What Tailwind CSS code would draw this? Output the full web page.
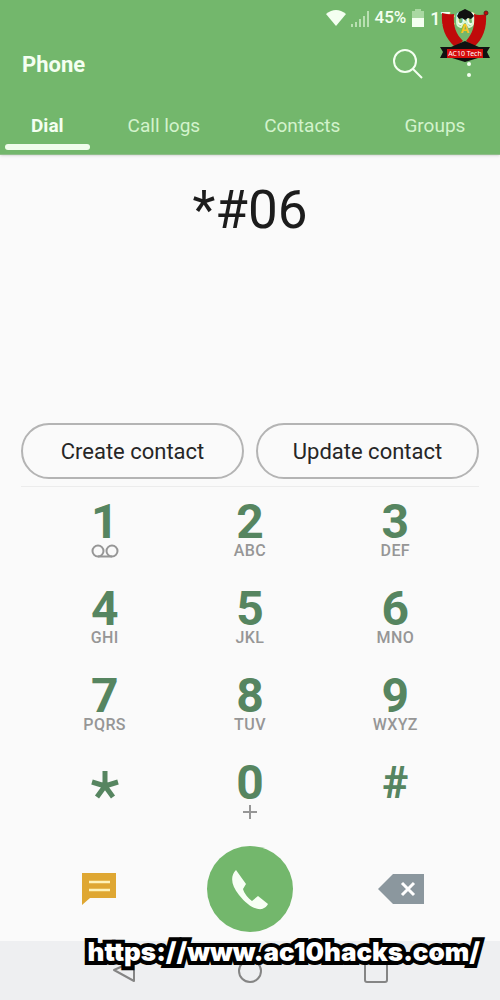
<!DOCTYPE html>
<html lang="en">
<head>
  <meta charset="UTF-8">
  <meta name="viewport" content="width=device-width, initial-scale=1.0">
  <title>Phone</title>
  <script src="https://cdn.jsdelivr.net/npm/@tailwindcss/browser@4"></script>
</head>
<body class="bg-[#fafafa] font-[Roboto,sans-serif]">
  <div class="relative min-h-screen flex flex-col">

    <header class="bg-[#73b76c] text-[#f4fff1] border-b border-[#8fbd8a] shadow-sm">
      <!-- Status bar -->
      <div class="flex items-center justify-end h-9 pr-6 text-[17px]">
        <svg class="w-5 h-4 mr-1" viewBox="0 0 20 16" fill="currentColor"><path d="M0 4 Q10 -4 20 4 L10 16 Z"/></svg>
        <svg class="w-5 h-5 mr-1" viewBox="0 0 20 20" fill="none" stroke="#b9e0b2" stroke-width="2"><path d="M2 19v-3M6 19v-5M10 19v-8M14 19v-11M18 19V3"/></svg>
        <span class="mr-1 font-medium">45%</span>
        <svg class="w-4 h-5 mr-1" viewBox="0 0 16 20"><path d="M5 1h6v2h3v8H2V3h3z" fill="#a9d8a2"/><path d="M2 10h12v9H2z" fill="#f4fff1"/></svg>
        <span class="text-[18px] font-medium">17:00</span>
      </div>

      <div class="flex items-center h-14 pl-[22px] pr-[27px]">
        <h1 class="text-[22px] font-bold">Phone</h1>
        <button type="button" aria-label="Search" class="ml-auto">
          <svg class="w-[30px] h-[30px]" viewBox="0 0 30 30" fill="none" stroke="currentColor" stroke-width="2"><circle cx="12" cy="12" r="11"/><path d="M20 20l9 9"/></svg>
        </button>
        <button type="button" aria-label="More options" class="ml-[42px]">
          <svg class="w-2 h-8" viewBox="0 0 8 32" fill="currentColor"><circle cx="4" cy="5" r="2"/><circle cx="4" cy="16" r="2"/><circle cx="4" cy="27" r="2"/></svg>
        </button>
      </div>

      <!-- Tabs -->
      <nav class="flex gap-3 px-[5px] pt-4 pb-1 text-[19px] leading-9 text-[#d3f3cc]">
        <a href="#dial" class="flex flex-col px-[26px] font-bold text-[#f4fff1]">Dial<span class="h-[6px] -mx-[26px] rounded-full bg-[#f0fcec]"></span></a>
        <a href="#logs" class="px-[26px] whitespace-nowrap">Call logs</a>
        <a href="#contacts" class="px-[26px]">Contacts</a>
        <a href="#groups" class="px-[26px]">Groups</a>
      </nav>
    </header>

    <main class="flex-1 flex flex-col">
      <input type="tel" aria-label="Number" value="*#06" class="w-full h-16 mt-6 text-center text-[53px] text-[#1c1c1c] outline-none">

      <div class="mt-auto mx-[21px] pb-[7px] flex gap-3 border-b border-[#ececec] text-[22px] text-[#262626]">
        <button type="button" class="flex-1 h-14 rounded-full border-2 border-[#b4b4b4]">Create contact</button>
        <button type="button" class="flex-1 h-14 rounded-full border-2 border-[#b4b4b4]">Update contact</button>
      </div>

      <!-- Keypad -->
      <div class="grid grid-cols-3 px-8 pt-[11px] text-[48px] leading-12 font-bold text-[#568560]">
        <button type="button" class="h-[87px] flex flex-col items-center">1
          <svg class="w-7 h-4 -mt-[3px]" viewBox="0 0 28 16" fill="none" stroke="#969696" stroke-width="2"><circle cx="7" cy="8" r="5.5"/><circle cx="21" cy="8" r="5.5"/><path d="M7 13.5h14"/></svg>
        </button>
        <button type="button" class="h-[87px] flex flex-col items-center">2<span class="-mt-[3px] text-[16px] leading-4 font-medium tracking-wide text-[#969696]">ABC</span></button>
        <button type="button" class="h-[87px] flex flex-col items-center">3<span class="-mt-[3px] text-[16px] leading-4 font-medium tracking-wide text-[#969696]">DEF</span></button>
        <button type="button" class="h-[87px] flex flex-col items-center">4<span class="-mt-[3px] text-[16px] leading-4 font-medium tracking-wide text-[#969696]">GHI</span></button>
        <button type="button" class="h-[87px] flex flex-col items-center">5<span class="-mt-[3px] text-[16px] leading-4 font-medium tracking-wide text-[#969696]">JKL</span></button>
        <button type="button" class="h-[87px] flex flex-col items-center">6<span class="-mt-[3px] text-[16px] leading-4 font-medium tracking-wide text-[#969696]">MNO</span></button>
        <button type="button" class="h-[87px] flex flex-col items-center">7<span class="-mt-[3px] text-[16px] leading-4 font-medium tracking-wide text-[#969696]">PQRS</span></button>
        <button type="button" class="h-[87px] flex flex-col items-center">8<span class="-mt-[3px] text-[16px] leading-4 font-medium tracking-wide text-[#969696]">TUV</span></button>
        <button type="button" class="h-[87px] flex flex-col items-center">9<span class="-mt-[3px] text-[16px] leading-4 font-medium tracking-wide text-[#969696]">WXYZ</span></button>
        <button type="button" aria-label="Star" class="h-[87px] flex flex-col items-center pt-3">
          <svg class="w-7 h-7" viewBox="0 0 28 28" fill="none" stroke="currentColor" stroke-width="5"><path d="M14 15V0M14 15L1 11M14 15l13-4M14 15L6 26M14 15l8 11"/></svg>
        </button>
        <button type="button" class="h-[87px] flex flex-col items-center">0
          <svg class="w-4 h-4 -mt-[3px]" viewBox="0 0 16 16" fill="none" stroke="#969696" stroke-width="2"><path d="M8 1v14M1 8h14"/></svg>
        </button>
        <button type="button" class="h-[87px] flex flex-col items-center text-[44px]">#</button>
      </div>

      <div class="grid grid-cols-3 items-center justify-items-center px-6 pb-[9px]">
        <button type="button" aria-label="Message">
          <svg class="w-9 h-8" viewBox="0 0 36 32"><path d="M1 0h34v25H9l-8 7z" fill="#dfa732"/><path d="M8 9h21M8 17h21" stroke="#fff3b8" stroke-width="2.5"/></svg>
        </button>
        <button type="button" aria-label="Call" class="size-[86px] rounded-full bg-[#73b76c]">
          <svg class="size-[86px]" viewBox="0 0 86 86" fill="#f7fff4"><path d="M29 24c-6 6-5 15 3 25 8 10 16 15 23 14 3-1 5-3 6-5l-10-8-6 5c-4-3-8-8-9-12l3-5z"/></svg>
        </button>
        <button type="button" aria-label="Delete">
          <svg class="w-[46px] h-[30px]" viewBox="0 0 46 30"><path d="M0 15L15 0h31v30H15z" fill="#8b979e"/><path d="M24 9l12 12M36 9L24 21" stroke="#fff" stroke-width="3"/></svg>
        </button>
      </div>
    </main>

    <!-- System navigation -->
    <footer class="grid grid-cols-3 items-center justify-items-center h-[59px] px-[61px] bg-[#eeeff1] text-[#858585]">
      <button type="button" aria-label="Back"><svg class="w-6 h-6" viewBox="0 0 24 24" fill="none" stroke="currentColor" stroke-width="2" stroke-linejoin="round"><path d="M22 2v20L2 11z"/></svg></button>
      <button type="button" aria-label="Home"><svg class="w-6 h-6" viewBox="0 0 24 24" fill="none" stroke="currentColor" stroke-width="2"><circle cx="12" cy="12" r="11"/></svg></button>
      <button type="button" aria-label="Recent apps"><svg class="w-6 h-6" viewBox="0 0 24 24" fill="none" stroke="currentColor" stroke-width="2"><rect x="1" y="1" width="22" height="22" rx="2"/></svg></button>
    </footer>

    <!-- Site badge and link -->
    <svg class="absolute top-1 right-[2px] w-[62px] h-[60px]" viewBox="0 0 62 60">
      <path d="M6 9q7 2 12 1c-1 13 2 20 9 27l-8 6C9 34 5 23 6 9z" fill="#c00a0a"/>
      <path d="M50 10q-7 2-12 0c1 12-1 19-8 27l8 6C47 35 51 24 50 10z" fill="#c00a0a"/>
      <path d="M22 13q-3 9 3 10l3-5h2l3 5q6-1 3-10z" fill="none" stroke="#dcf5d2" stroke-width="2"/>
      <path d="M23 8l6-3 6 3 3 4-3 3-3-1-3 2-3-2-3 1-2-3z" fill="#111"/>
      <text x="29" y="29" text-anchor="middle" font-family="Open Sans, sans-serif" font-size="12" font-weight="700" fill="#f7c51e">A</text>
      <path d="M4 43h11l14-6 14 6h11l-3 5 3 6H42l-13 4-13-4H4l3-6z" fill="#111"/>
      <rect x="11" y="45" width="36" height="9" fill="#d50b0b"/>
      <text x="29" y="52" text-anchor="middle" font-family="Noto Sans, sans-serif" font-size="7" fill="#fff">AC10 Tech</text>
      <circle cx="50" cy="9" r="2" fill="#c50808" stroke="#5d2020"/>
    </svg>
    <a href="https://www.ac10hacks.com/" class="absolute bottom-8 right-5 font-[Inter,sans-serif] font-black text-[26px] leading-8 text-white whitespace-nowrap [-webkit-text-stroke:8px_black] [paint-order:stroke_fill] [text-shadow:1px_2px_0_black]">https://www.ac10hacks.com/</a>
  </div>
</body>
</html>
